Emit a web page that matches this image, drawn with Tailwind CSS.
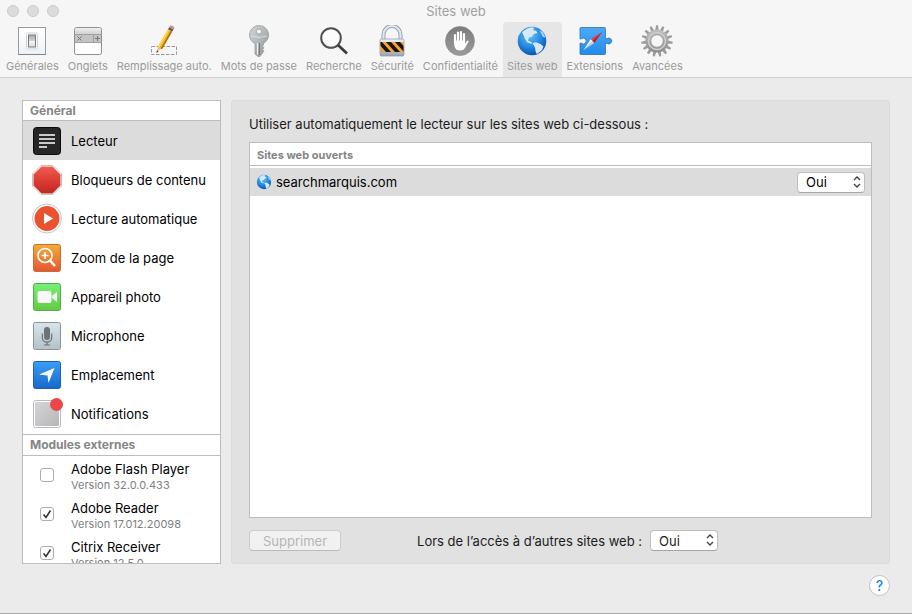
<!DOCTYPE html>
<html lang="fr">
  <head>
    <meta charset="utf-8" />
    <meta name="viewport" content="width=device-width, initial-scale=1.0" />
    <title>Sites web</title>
    <script src="https://cdn.jsdelivr.net/npm/@tailwindcss/browser@4"></script>
  </head>
  <body class="bg-[#ebebeb] font-[Inter,sans-serif] text-[13px] leading-4 text-[#1c1c1c]">
    <div class="flex h-screen flex-col border-b border-[#a9a9a9]">
      <!-- Title bar and toolbar -->
      <header class="border-b border-[#cfcfcf] bg-[#f6f6f6]">
        <div class="grid h-[22px] grid-cols-[1fr_auto_1fr] items-center px-[7px]">
          <div class="flex gap-2">
            <span class="size-3 rounded-full border border-[#cbcbcb] bg-[#dcdcdc]"></span>
            <span class="size-3 rounded-full border border-[#cbcbcb] bg-[#dcdcdc]"></span>
            <span class="size-3 rounded-full border border-[#cbcbcb] bg-[#dcdcdc]"></span>
          </div>
          <h1 class="text-[13px] text-[#a0a0a0]">Sites web</h1>
        </div>
        <nav class="flex gap-px px-[2px] text-[11px] leading-[14px] whitespace-nowrap text-[#9b9b9b]">
          <button class="flex flex-col items-center gap-[2px] px-1 pt-[3px] pb-1">
            <svg class="size-8" viewBox="0 0 32 32">
              <defs>
                <linearGradient id="plate" x2="0" y2="1"><stop stop-color="#fff" /><stop offset="1" stop-color="#eef2f5" /></linearGradient>
                <linearGradient id="switch" x2="0" y2="1"><stop stop-color="#aaa" /><stop offset=".5" stop-color="#d5d5d5" /><stop offset=".5" stop-color="#f4f4f4" /><stop offset="1" stop-color="#ddd" /></linearGradient>
              </defs>
              <rect x="2.5" y="2.5" width="27" height="27" fill="url(#plate)" stroke="#9b9b9b" />
              <path d="M2 29.5h28" stroke="#7d8488" />
              <rect x="10.500" y="8" width="11" height="16" rx="1.500" fill="#fff" stroke="#cdd2d5" />
              <rect x="12.500" y="10" width="7" height="12" fill="url(#switch)" stroke="#777" />
            </svg>
            Générales
          </button>
          <button class="flex flex-col items-center gap-[2px] px-1 pt-[3px] pb-1">
            <svg class="size-8" viewBox="0 0 32 32">
              <defs>
                <linearGradient id="tabtop" x2="0" y2="1"><stop stop-color="#eee" /><stop offset="1" stop-color="#d2d2d2" /></linearGradient>
              </defs>
              <rect x="2.500" y="2.500" width="27" height="27" rx="2" fill="#fff" stroke="#8f8f8f" />
              <path d="M3 9V4.500Q3 3 4.500 3h23Q29 3 29 4.500V9z" fill="url(#tabtop)" />
              <path d="M3 9h26v8H3z" fill="#c4c4c4" />
              <path d="M2.500 9.500h27M2.500 17.500h27M21.500 9v8" stroke="#a0a0a0" />
              <path d="M5.500 11.500l4 4m0-4l-4 4M25.500 11v5M23 13.500h5" stroke="#777" fill="none" />
            </svg>
            Onglets
          </button>
          <button class="flex flex-col items-center gap-[2px] px-1 pt-[3px] pb-1">
            <svg class="size-8" viewBox="0 0 32 32">
              <rect x="3.500" y="21.500" width="25" height="8" fill="none" stroke="#969696" stroke-dasharray="3.500 1.500" />
              <path d="M8.500 27.500l1.500-6 3.500 2z" fill="#e5c297" />
              <path d="M8.300 28.200l.7-2.800 1.500.9z" fill="#333" />
              <path d="M9.800 21.800L20 4.200l4.200 2.400L14 24.200z" fill="#f5b52b" />
              <path d="M9.800 21.800L20 4.200l1.400.8L11.200 22.600z" fill="#ffdc55" />
              <path d="M12.600 23.400L22.800 5.800l1.400.8L14 24.200z" fill="#a96d13" />
              <path d="M20 4.200l1.300-2.200 4.200 2.400-1.300 2.200z" fill="#555c68" />
              <path d="M21.300 2l.6-1q.6-.8 2-.3l1.700.9q1 .7.500 1.800l-.6 1z" fill="#dd8792" />
            </svg>
            Remplissage auto.
          </button>
          <button class="flex flex-col items-center gap-[2px] px-1 pt-[3px] pb-1">
            <svg class="size-8" viewBox="0 0 32 32">
              <defs>
                <linearGradient id="key" x2="1" y2="1"><stop stop-color="#d4d8da" /><stop offset="1" stop-color="#8f9497" /></linearGradient>
              </defs>
              <path fill-rule="evenodd" d="M16 .5a9.500 9.500 0 0 1 4.500 17.900V20l-1.200 1.300 1.700 1.500-1.500 1.700 1.500 1.600-1.500 2-2.500 3.400h-2L12 29V18.600A9.500 9.500 0 0 1 16 .5zm0 3.500a2.500 2.500 0 1 0 0 5 2.500 2.500 0 0 0 0-5z" fill="url(#key)" stroke="#8f9395" stroke-width=".7" />
              <path d="M14.500 18v11.500" stroke="#eee" /><path d="M16.500 18v12" stroke="#777" />
              <path d="M8 11q8 3 16 0" stroke="#e2e5e6" stroke-width=".8" fill="none" />
            </svg>
            Mots de passe
          </button>
          <button class="flex flex-col items-center gap-[2px] px-1 pt-[3px] pb-1">
            <svg class="size-8" viewBox="0 0 32 32">
              <circle cx="13" cy="13" r="9.800" fill="#fbfbfb" stroke="#505050" stroke-width="2" />
              <path d="M20 20l9 8.500" stroke="#3c3c3c" stroke-width="2.800" />
            </svg>
            Recherche
          </button>
          <button class="flex flex-col items-center gap-[2px] px-1 pt-[3px] pb-1">
            <svg class="size-8" viewBox="0 0 32 32">
              <defs>
                <linearGradient id="steel" x2="0" y2="1"><stop stop-color="#edf1f6" /><stop offset="1" stop-color="#9ba4b1" /></linearGradient>
                <clipPath id="band"><path d="M4.500 17h23v10h-23z" /></clipPath>
              </defs>
              <path d="M7.500 15V9.500a8.500 8.500 0 0 1 17 0V15" fill="none" stroke="#98a2b2" stroke-width="4" />
              <path d="M7.500 15V9.500a8.500 8.500 0 0 1 17 0V15" fill="none" stroke="#e3e9f3" stroke-width="2" />
              <rect x="4" y="14" width="24" height="17" rx="1.500" fill="url(#steel)" stroke="#8d95a2" stroke-width=".7" />
              <g clip-path="url(#band)">
                <path d="M4 17h24v10H4z" fill="#f2a13b" />
                <path d="M1 17h5l9 10h-5zM10 17h5l9 10h-5zM19 17h5l9 10h-5z" fill="#1b1610" />
              </g>
            </svg>
            Sécurité
          </button>
          <button class="flex flex-col items-center gap-[2px] px-1 pt-[3px] pb-1">
            <svg class="size-8" viewBox="0 0 32 32">
              <defs>
                <linearGradient id="disc" x2="0" y2="1"><stop stop-color="#7c7c7c" /><stop offset="1" stop-color="#9b9b9b" /></linearGradient>
              </defs>
              <circle cx="16" cy="16" r="14.500" fill="url(#disc)" stroke="#858585" stroke-width=".6" />
              <path d="M11 10v8M14 7.500V17M17 7v10M20 9v9" stroke="#fff" stroke-width="2.200" stroke-linecap="round" />
              <path d="M9.900 15.500h11.200v3.300l1.700-2.600q1.300-1.200 2 .1L21.500 22q-1.500 3.500-5.500 3.500-4.500 0-5.600-4.500z" fill="#fff" />
            </svg>
            Confidentialité
          </button>
          <button aria-current="page" class="flex flex-col items-center gap-[2px] rounded-t bg-[#e6e6e6] px-1 pt-[3px] pb-1">
            <svg class="size-8" viewBox="0 0 32 32">
              <defs>
                <radialGradient id="ocean" cx=".42" cy=".3" r=".7"><stop stop-color="#62c0f8" /><stop offset=".6" stop-color="#2488e0" /><stop offset="1" stop-color="#0b55ab" /></radialGradient>
                <symbol id="globe" viewBox="0 0 32 32">
                  <circle cx="16" cy="16" r="14.300" fill="url(#ocean)" />
                  <path d="M6 7.500Q10 3 15.500 2.200l3 .8-1.500 2 3 .8 1.500 2.200-3.500 1-2.500 3-2.500.5-1 3 2 1 2.500 1.500-1 .7-4-1.200-2.500-3.500-1.500-4z" fill="#d7e9f5" />
                  <path d="M16.500 18l3.500-.8 4.500 1.800 3 2.500-1.500 3.500-3 2.500-2.500 1.500-1-3-.5-3.500z" fill="#d7e9f5" />
                  <path d="M23.500 5l3.500 2.500 2.500 5-2.500-.5-2-3.500z" fill="#a7d3f1" />
                </symbol>
              </defs>
              <use href="#globe" />
            </svg>
            Sites web
          </button>
          <button class="flex flex-col items-center gap-[2px] px-1 pt-[3px] pb-1">
            <svg class="size-8 overflow-visible" viewBox="0 0 32 32">
              <defs>
                <linearGradient id="puzzle" x2="0" y2="1"><stop stop-color="#4eaaf7" /><stop offset="1" stop-color="#228be8" /></linearGradient>
              </defs>
              <path d="M2 2.500h23.500q1 0 1 1v10.300h1.400a2.900 2.900 0 1 1 0 4.400h-1.400v10.300q0 1-1 1H2q-1 0-1-1V18.200h1.400a2.900 2.900 0 1 0 0-4.400H1V3.500q0-1 1-1z" fill="url(#puzzle)" stroke="#2872b6" stroke-width=".8" />
              <path d="M23 7L11.700 14.300l3.600 3.600z" fill="#ea3e3b" />
              <path d="M23 7l-7.700 10.900-1.800-1.800z" fill="#b91f27" />
              <path d="M4.500 25l7.200-10.700 1.800 1.800z" fill="#fff" />
              <path d="M4.500 25l9-8.900 1.800 1.800z" fill="#c4d3df" />
            </svg>
            Extensions
          </button>
          <button class="flex flex-col items-center gap-[2px] px-1 pt-[3px] pb-1">
            <svg class="size-8" viewBox="0 0 32 32">
              <defs>
                <linearGradient id="gear" x2="0" y2="1"><stop stop-color="#bcbcbc" /><stop offset="1" stop-color="#909090" /></linearGradient>
                <path id="tooth" d="M14.200 6l.8-5.700h2l.8 5.700z" />
              </defs>
              <g fill="#9c9c9c">
                <use href="#tooth" /><use href="#tooth" transform="rotate(24 16 16)" /><use href="#tooth" transform="rotate(48 16 16)" />
                <use href="#tooth" transform="rotate(72 16 16)" /><use href="#tooth" transform="rotate(96 16 16)" /><use href="#tooth" transform="rotate(120 16 16)" />
                <use href="#tooth" transform="rotate(144 16 16)" /><use href="#tooth" transform="rotate(168 16 16)" /><use href="#tooth" transform="rotate(192 16 16)" />
                <use href="#tooth" transform="rotate(216 16 16)" /><use href="#tooth" transform="rotate(240 16 16)" /><use href="#tooth" transform="rotate(264 16 16)" />
                <use href="#tooth" transform="rotate(288 16 16)" /><use href="#tooth" transform="rotate(312 16 16)" /><use href="#tooth" transform="rotate(336 16 16)" />
              </g>
              <circle cx="16" cy="16" r="9" fill="none" stroke="url(#gear)" stroke-width="5" />
              <circle cx="16" cy="16" r="8.500" fill="none" stroke="#cecece" stroke-width="1.500" />
              <circle cx="16" cy="16" r="6.300" fill="#f6f6f6" stroke="#808080" stroke-width=".8" />
            </svg>
            Avancées
          </button>
        </nav>
      </header>

      <main class="flex min-h-0 flex-1 gap-[10px] px-[22px] pt-[22px]">
        <!-- Settings list -->
        <aside class="w-[199px] shrink-0 overflow-hidden border border-[#bdbdbd] bg-white text-black">
          <h2 class="border-b border-[#bdbdbd] px-[7px] pt-[2px] pb-px text-xs leading-4 font-bold text-[#858585]">Général</h2>
          <ul class="pb-px">
            <li>
              <button class="flex h-[39px] w-full items-center gap-2 bg-[#dcdcdc] px-2">
                <svg class="size-8" viewBox="0 0 32 32">
                  <rect x="2.500" y="2.500" width="27" height="27" rx="3" fill="#262626" stroke="#090909" />
                  <path d="M8 10h16M8 14h16M8 18h16M8 22h8" stroke="#fff" stroke-width="1.700" />
                </svg>
                Lecteur
              </button>
            </li>
            <li>
              <button class="flex h-[39px] w-full items-center gap-2 px-2">
                <svg class="size-8" viewBox="0 0 32 32">
                  <defs>
                    <linearGradient id="stop" x2="0" y2="1"><stop stop-color="#ef5c50" /><stop offset=".5" stop-color="#dc3d35" /><stop offset="1" stop-color="#bd2a24" /></linearGradient>
                  </defs>
                  <path d="M10 1.500h12l8.500 8.500v12L22 30.500H10L1.500 22V10z" fill="#fff" stroke="#c3c3c3" />
                  <path d="M10.500 2.500h11l8 8v11l-8 8h-11l-8-8v-11z" fill="url(#stop)" />
                </svg>
                Bloqueurs de contenu
              </button>
            </li>
            <li>
              <button class="flex h-[39px] w-full items-center gap-2 px-2">
                <svg class="size-8" viewBox="0 0 32 32">
                  <circle cx="16" cy="15.500" r="14.500" fill="#fff" stroke="#c6c6c6" />
                  <circle cx="16" cy="15.500" r="12.500" fill="#e95330" />
                  <path d="M13 10l9 5.500-9 5.500z" fill="#fff" />
                </svg>
                Lecture automatique
              </button>
            </li>
            <li>
              <button class="flex h-[39px] w-full items-center gap-2 px-2">
                <svg class="size-8" viewBox="0 0 32 32">
                  <defs>
                    <linearGradient id="zoom" x2="0" y2="1"><stop stop-color="#f3ae35" /><stop offset="1" stop-color="#e65532" /></linearGradient>
                  </defs>
                  <rect x="2.500" y="2.500" width="27" height="27" rx="2" fill="url(#zoom)" stroke="#c37034" />
                  <circle cx="14" cy="13.500" r="7" fill="none" stroke="#fff" stroke-width="1.700" />
                  <path d="M14 10v7M10.500 13.500h7" stroke="#fff" stroke-width="1.700" />
                  <path d="M19 18.500l5 5.500" stroke="#fff" stroke-width="2.500" />
                </svg>
                Zoom de la page
              </button>
            </li>
            <li>
              <button class="flex h-[39px] w-full items-center gap-2 px-2">
                <svg class="size-8" viewBox="0 0 32 32">
                  <defs>
                    <linearGradient id="camera" x2="0" y2="1"><stop stop-color="#78ef78" /><stop offset="1" stop-color="#61cc42" /></linearGradient>
                  </defs>
                  <rect x="2.500" y="2.500" width="27" height="27" rx="2" fill="url(#camera)" stroke="#58aa4c" />
                  <rect x="6.500" y="10" width="14" height="12" rx="2" fill="#f8f8f8" />
                  <path d="M21 15l5-4v10l-5-4z" fill="#f8f8f8" />
                </svg>
                Appareil photo
              </button>
            </li>
            <li>
              <button class="flex h-[39px] w-full items-center gap-2 px-2">
                <svg class="size-8" viewBox="0 0 32 32">
                  <defs>
                    <linearGradient id="mic" x2="0" y2="1"><stop stop-color="#d8e5ea" /><stop offset="1" stop-color="#b4c1c6" /></linearGradient>
                  </defs>
                  <rect x="2.500" y="2.500" width="27" height="27" rx="2" fill="url(#mic)" stroke="#899499" />
                  <rect x="13" y="7" width="6" height="13" rx="3" fill="#697379" />
                  <path d="M11.300 13.500v4a4.700 4.700 0 0 0 9.400 0v-4M16 22v3M13 25h6" fill="none" stroke="#697379" stroke-width="1.200" />
                </svg>
                Microphone
              </button>
            </li>
            <li>
              <button class="flex h-[39px] w-full items-center gap-2 px-2">
                <svg class="size-8" viewBox="0 0 32 32">
                  <defs>
                    <linearGradient id="place" x2="0" y2="1"><stop stop-color="#399ff7" /><stop offset="1" stop-color="#1768cd" /></linearGradient>
                  </defs>
                  <rect x="2.500" y="2.500" width="27" height="27" rx="2" fill="url(#place)" stroke="#235fa5" />
                  <path d="M23.500 9L17.500 24l-1-7.500L8 15.500z" fill="#fff" />
                </svg>
                Emplacement
              </button>
            </li>
            <li>
              <button class="flex h-[39px] w-full items-center gap-2 px-2">
                <svg class="size-8 overflow-visible" viewBox="0 0 32 32">
                  <defs>
                    <linearGradient id="notif" x2="1" y2="1"><stop stop-color="#d5d5d7" /><stop offset="1" stop-color="#b7b7ba" /></linearGradient>
                  </defs>
                  <rect x="2.500" y="2.500" width="27" height="27" rx="2" fill="#fff" stroke="#bababa" />
                  <rect x="4" y="4" width="24" height="24" rx="1" fill="url(#notif)" />
                  <circle cx="25.500" cy="6.500" r="6.500" fill="#eb4748" />
                </svg>
                Notifications
              </button>
            </li>
          </ul>
          <h2 class="border-y border-[#bdbdbd] px-[7px] py-[2px] text-xs leading-4 font-bold text-[#858585]">Modules externes</h2>
          <ul>
            <li>
              <label class="flex h-[39px] items-start gap-[17px] px-[17px] pt-[5px]">
                <span class="my-[7px] grid *:col-start-1 *:row-start-1">
                  <input type="checkbox" class="peer size-[14px] appearance-none rounded-[3px] border border-[#adadad] bg-white" />
                  <svg class="pointer-events-none hidden size-[14px] peer-checked:block" viewBox="0 0 14 14"><path d="M3.500 7.500l2.500 3 4.500-7" fill="none" stroke="#333" stroke-width="1.600" /></svg>
                </span>
                <span>Adobe Flash Player<span class="block text-[11px] text-[#808080]">Version 32.0.0.433</span></span>
              </label>
            </li>
            <li>
              <label class="flex h-[39px] items-start gap-[17px] px-[17px] pt-[5px]">
                <span class="my-[7px] grid *:col-start-1 *:row-start-1">
                  <input type="checkbox" checked class="peer size-[14px] appearance-none rounded-[3px] border border-[#adadad] bg-white" />
                  <svg class="pointer-events-none hidden size-[14px] peer-checked:block" viewBox="0 0 14 14"><path d="M3.500 7.500l2.500 3 4.500-7" fill="none" stroke="#333" stroke-width="1.600" /></svg>
                </span>
                <span>Adobe Reader<span class="block text-[11px] text-[#808080]">Version 17.012.20098</span></span>
              </label>
            </li>
            <li>
              <label class="flex h-[39px] items-start gap-[17px] px-[17px] pt-[5px]">
                <span class="my-[7px] grid *:col-start-1 *:row-start-1">
                  <input type="checkbox" checked class="peer size-[14px] appearance-none rounded-[3px] border border-[#adadad] bg-white" />
                  <svg class="pointer-events-none hidden size-[14px] peer-checked:block" viewBox="0 0 14 14"><path d="M3.500 7.500l2.500 3 4.500-7" fill="none" stroke="#333" stroke-width="1.600" /></svg>
                </span>
                <span>Citrix Receiver<span class="block text-[11px] text-[#808080]">Version 12.5.0</span></span>
              </label>
            </li>
          </ul>
        </aside>

        <!-- Reader settings -->
        <section class="flex min-w-0 flex-1 flex-col rounded-[3px] border border-[#dadada] bg-[#e1e1e1] px-[17px] pt-[15px] pb-3">
          <p>Utiliser automatiquement le lecteur sur les sites web ci-dessous :</p>
          <div class="mt-[10px] min-h-0 flex-1 border border-[#bdbdbd] bg-white">
            <table class="w-full text-black">
              <thead>
                <tr>
                  <th colspan="2" class="pb-[2px] text-left text-[11px] font-bold text-[#858585]">
                    <div class="border-b border-[#bdbdbd] px-[7px] pt-1 pb-[2px]">Sites web ouverts</div>
                  </th>
                </tr>
              </thead>
              <tbody>
                <tr class="h-7 bg-[#dcdcdc]">
                  <td class="pl-[6px]">
                    <div class="flex items-center gap-1">
                      <svg class="size-4" viewBox="0 0 32 32"><use href="#globe" /></svg>
                      <span id="site">searchmarquis.com</span>
                    </div>
                  </td>
                  <td class="w-[74px]">
                    <div class="relative w-[68px]">
                      <select aria-labelledby="site" class="block h-[21px] w-full appearance-none rounded border border-[#bebebe] border-b-[#a6a6a6] bg-white pl-2 leading-4">
                        <option>Oui</option>
                        <option>Non</option>
                      </select>
                      <svg class="pointer-events-none absolute top-1 right-1 h-3 w-2" viewBox="0 0 8 12" fill="none" stroke="#444" stroke-width="1.400"><path d="M1 4l3-3 3 3M1 8l3 3 3-3" /></svg>
                    </div>
                  </td>
                </tr>
              </tbody>
            </table>
          </div>
          <div class="mt-3 flex items-center">
            <button disabled class="h-[21px] w-[92px] rounded border border-[#cdcdcd] border-b-[#bbb] bg-[#f1f1f1] text-[#b5b5b5]">Supprimer</button>
            <div class="flex flex-1 items-center justify-end gap-2 pr-[154px]">
              <label for="others">Lors de l’accès à d’autres sites web :</label>
              <div class="relative w-[68px]">
                <select id="others" class="block h-[21px] w-full appearance-none rounded border border-[#bebebe] border-b-[#a6a6a6] bg-white pl-2 leading-4">
                  <option>Oui</option>
                  <option>Non</option>
                </select>
                <svg class="pointer-events-none absolute top-1 right-1 h-3 w-2" viewBox="0 0 8 12" fill="none" stroke="#444" stroke-width="1.400"><path d="M1 4l3-3 3 3M1 8l3 3 3-3" /></svg>
              </div>
            </div>
          </div>
        </section>
      </main>

      <footer class="flex justify-end px-[22px] pt-[11px] pb-[17px]">
        <button aria-label="Aide" class="size-[21px] rounded-full border border-[#c2c2c2] bg-white text-[14px] leading-4 font-medium text-[#1687e0]">?</button>
      </footer>
    </div>
  </body>
</html>
